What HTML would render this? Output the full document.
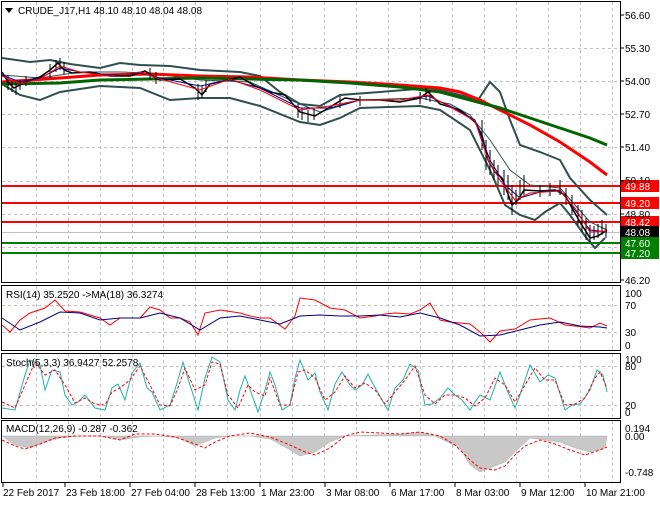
<!DOCTYPE html>
<html><head><meta charset="utf-8"><style>
body{margin:0;background:#fff;width:660px;height:500px;overflow:hidden;font-family:"Liberation Sans",sans-serif}
svg text{font-family:"Liberation Sans",sans-serif;font-size:10px;fill:#000}
</style></head><body>
<svg width="660" height="500" xmlns="http://www.w3.org/2000/svg">
<rect width="660" height="500" fill="#fff"/>
<g fill="none" stroke="#000" stroke-width="1">
<rect x="1.5" y="1.5" width="619" height="281"/>
<rect x="1.5" y="285.5" width="619" height="65"/>
<rect x="1.5" y="353.5" width="619" height="65"/>
<rect x="1.5" y="420.5" width="619" height="62"/>
</g>
<g stroke="#c0c0c0" stroke-dasharray="3,3" stroke-width="1">
<path d="M36.5 2V282M68.5 2V282M100.5 2V282M132.5 2V282M163.5 2V282M195.5 2V282M227.5 2V282M260.5 2V282M292.5 2V282M324.5 2V282M356.5 2V282M388.5 2V282M420.5 2V282M452.5 2V282M484.5 2V282M516.5 2V282M548.5 2V282M580.5 2V282M612.5 2V282"/>
<path d="M36.5 286V350M68.5 286V350M100.5 286V350M132.5 286V350M163.5 286V350M195.5 286V350M227.5 286V350M260.5 286V350M292.5 286V350M324.5 286V350M356.5 286V350M388.5 286V350M420.5 286V350M452.5 286V350M484.5 286V350M516.5 286V350M548.5 286V350M580.5 286V350M612.5 286V350"/>
<path d="M36.5 354V418M68.5 354V418M100.5 354V418M132.5 354V418M163.5 354V418M195.5 354V418M227.5 354V418M260.5 354V418M292.5 354V418M324.5 354V418M356.5 354V418M388.5 354V418M420.5 354V418M452.5 354V418M484.5 354V418M516.5 354V418M548.5 354V418M580.5 354V418M612.5 354V418"/>
<path d="M36.5 421V482M68.5 421V482M100.5 421V482M132.5 421V482M163.5 421V482M195.5 421V482M227.5 421V482M260.5 421V482M292.5 421V482M324.5 421V482M356.5 421V482M388.5 421V482M420.5 421V482M452.5 421V482M484.5 421V482M516.5 421V482M548.5 421V482M580.5 421V482M612.5 421V482"/>
<path d="M2 48.5H620M2 81.5H620M2 114.5H620M2 147.5H620M2 181.5H620M2 214.5H620M2 247.5H620"/>
<path d="M2 305.5H620M2 332.5H620M2 366.5H620M2 405.5H620"/>
</g>
<path d="M2 186H620M2 203H620M2 222H620" stroke="#f00" stroke-width="2"/>
<path d="M2 243H620M2 253H620" stroke="#008000" stroke-width="2"/>
<path d="M2 232.5H620" stroke="#c0c0c0" stroke-width="1"/>
<g fill="none" stroke="#2f4f4f" stroke-width="2">
<polyline points="2,58 30,62 50,60 70,64 100,68 120,63 140,65 170,66 200,70 240,72 260,76 280,92 300,104 320,106 340,95 380,92 430,88 460,95 478,100 490,82 500,92 510,120 520,145 540,152 560,160 570,178 590,200 607,215"/>
<polyline points="2,84 20,95 40,100 60,92 100,86 140,88 170,100 200,98 230,98 260,106 300,122 320,125 340,118 360,108 420,106 440,110 470,130 490,170 505,205 520,215 535,220 545,212 560,203 570,215 585,236 595,248 605,238"/>
<polyline points="2,75 40,78 80,72 120,72 150,73 200,80 250,82 290,100 320,112 360,100 420,98 450,104 470,115 490,140 510,170 530,185 560,188 575,205 590,222 607,230" stroke-width="1"/>
</g>
<polyline fill="none" stroke="#f00" stroke-width="3" points="2,82 60,78 100,75 150,74 200,76 250,77 300,80 350,82 400,85 440,88 460,92 480,100 500,110 530,125 560,142 590,162 607,175"/>
<polyline fill="none" stroke="#006400" stroke-width="3" points="2,84 60,83 100,80 150,79 200,78 250,79 300,80 350,83 400,87 440,92 470,100 500,108 530,118 560,128 590,138 607,145"/>
<!-- bars -->
<path stroke="#000" stroke-width="1" d="M8 76V90M12 80V92M16 82V95M20 80V90M26 76V86M50 64V78M56 60V72M60 58V70M64 62V74M150 68V80M156 72V84M198 84V100M202 86V98M206 80V92M298 104V118M302 108V120M308 110V122M314 108V120M340 96V108M360 96V106M420 92V104M426 88V100M430 90V102M482 120V150M486 140V170M490 150V175M494 160V180M498 165V185M504 170V195M508 175V200M512 185V215M516 190V205M520 180V200M524 175V195M540 185V197M550 183V196M560 180V195M566 188V205M572 195V215M578 205V225M582 210V232M586 218V240M590 225V242M594 226V240M598 224V238M602 220V235M606 224V238"/>
<polyline fill="none" stroke="#000" stroke-width="1.5" points="2,72 8,82 14,88 22,84 30,80 40,77 50,70 58,63 64,70 72,73 90,72 110,76 130,76 145,71 160,80 180,79 195,88 202,95 210,84 240,77 255,86 270,92 285,95 300,112 315,116 335,104 345,98 360,100 380,100 400,102 420,98 428,92 440,104 460,110 475,122 482,135 488,160 495,172 502,178 512,205 518,200 524,190 540,191 555,190 565,195 572,208 580,222 590,238 598,236 607,230"/>
<polyline fill="none" stroke="#00008b" stroke-width="1" points="2,75 20,82 40,78 60,68 80,72 110,75 140,73 160,78 200,86 230,80 260,88 300,108 330,108 360,100 400,100 428,96 450,106 475,120 490,160 505,185 520,198 540,192 560,190 575,210 590,230 607,232"/>
<polyline fill="none" stroke="#f00" stroke-width="1" points="2,76 20,84 40,79 60,66 80,72 110,76 140,72 160,79 200,90 230,79 260,90 300,110 330,106 360,100 400,100 428,95 450,107 475,121 488,160 500,180 515,200 530,193 560,191 575,208 590,232 607,231"/>
<polyline fill="none" stroke="#f00" stroke-width="1" points="2,325 10,332 20,320 30,313 45,308 55,300 65,311 80,312 100,318 110,325 120,318 140,318 150,307 160,310 170,318 180,318 190,322 198,335 205,313 220,310 240,313 250,316 260,318 270,318 285,329 295,316 300,298 315,300 330,308 345,310 360,318 375,316 385,314 395,313 410,314 420,310 430,303 440,320 450,322 470,324 480,332 490,342 500,331 515,329 530,320 550,318 565,325 575,326 590,328 600,323 607,326"/>
<polyline fill="none" stroke="#00008b" stroke-width="1" points="2,318 20,330 40,322 60,312 80,313 100,320 120,318 140,318 160,313 180,318 200,330 220,318 240,316 260,320 280,324 300,316 320,315 340,316 360,316 380,315 400,317 420,313 440,318 460,325 480,336 500,335 520,330 540,325 560,322 580,326 600,327 607,328"/>
<polyline fill="none" stroke="#20b2aa" stroke-width="1" points="2,408 15,410 25,375 30,360 40,365 45,390 52,370 60,372 65,395 72,405 78,402 85,395 95,408 105,410 112,388 118,384 125,400 132,373 140,363 147,388 152,392 160,410 170,405 178,380 183,362 190,385 198,410 205,378 212,357 220,362 228,400 235,410 240,390 245,376 252,395 258,412 265,390 270,372 275,385 282,410 290,405 295,378 300,360 308,380 315,373 320,392 328,410 335,384 342,372 350,385 355,390 362,385 368,374 372,382 382,400 388,410 395,388 403,380 410,364 418,370 425,405 432,404 440,398 448,388 455,395 462,400 470,410 475,402 480,395 490,400 500,372 507,390 515,408 520,395 530,365 540,382 548,375 555,378 565,410 572,405 580,404 590,390 597,370 603,375 607,392"/>
<polyline fill="none" stroke="#f00" stroke-width="1" stroke-dasharray="3,2" points="2,402 15,408 25,385 35,362 45,375 55,370 65,385 75,403 85,398 95,404 105,405 112,392 120,388 130,380 140,366 150,385 160,405 170,406 178,388 185,368 195,390 205,385 212,362 220,364 228,395 238,408 248,385 255,392 265,396 270,378 280,405 290,405 298,372 305,370 315,378 325,400 335,392 345,376 355,388 365,383 375,390 385,404 395,392 405,380 415,366 425,395 435,404 445,395 455,395 465,398 475,406 485,398 495,378 505,385 515,402 525,385 535,368 545,380 555,380 565,405 575,404 585,398 595,378 600,372 607,388"/>
<path d="M2 436 L15 445 L30 448 L45 442 L60 438 L80 436 L100 436 L120 440 L140 437 L160 436 L180 438 L195 446 L205 442 L215 438 L230 436 L250 436 L270 439 L285 447 L300 456 L315 452 L330 442 L345 436 L400 434 L420 432 L435 436 L460 448 L470 465 L480 472 L490 468 L505 462 L515 452 L530 438 L545 440 L560 442 L575 448 L590 452 L605 448 L607 436 Z" fill="#c8c8c8" stroke="#b0b0b0" stroke-width="0.5"/>
<polyline fill="none" stroke="#f00" stroke-width="1" stroke-dasharray="3,2" points="2,440 15,446 25,449 40,444 55,438 75,436 100,436 120,440 135,434 155,434 175,437 195,444 205,448 215,442 230,436 250,433 270,437 290,445 305,452 315,455 330,448 345,436 360,432 380,433 400,434 420,432 440,436 455,445 470,460 480,468 495,470 505,466 515,455 525,446 540,440 555,444 570,450 585,455 600,450 607,447"/>
<rect x="621" y="180" width="38" height="12" fill="#f00"/>
<rect x="621" y="197" width="38" height="12" fill="#f00"/>
<rect x="621" y="216" width="38" height="12" fill="#f00"/>
<rect x="621" y="226" width="38" height="12" fill="#000"/>
<rect x="621" y="237" width="38" height="12" fill="#008000"/>
<rect x="621" y="247" width="38" height="12" fill="#008000"/>
<g>
<text x="625" y="19">56.60</text><text x="625" y="52">55.30</text><text x="625" y="85">54.00</text><text x="625" y="118">52.70</text><text x="625" y="151">51.40</text><text x="625" y="184">50.10</text><text x="625" y="218">48.80</text><text x="625" y="284">46.20</text>
<text x="625" y="190" style="fill:#fff">49.88</text><text x="625" y="207" style="fill:#fff">49.20</text><text x="625" y="226" style="fill:#fff">48.42</text><text x="625" y="236" style="fill:#fff">48.08</text><text x="625" y="247" style="fill:#fff">47.60</text><text x="625" y="257" style="fill:#fff">47.20</text>
<text x="625" y="297">100</text><text x="625" y="309">70</text><text x="625" y="336">30</text><text x="625" y="349">0</text>
<text x="625" y="363">100</text><text x="625" y="370">80</text><text x="625" y="409">20</text><text x="625" y="416">0</text>
<text x="625" y="432">0.194</text><text x="625" y="440">0.00</text><text x="625" y="476">-0.748</text>
</g>
<path d="M621 15H624M621 48H624M621 81H624M621 114H624M621 147H624M621 181H624M621 214H624M621 280H624" stroke="#000"/>
<path d="M3 483V487M65 483V487M130 483V487M195 483V487M260 483V487M325 483V487M390 483V487M455 483V487M520 483V487M585 483V487" stroke="#000"/>
<path d="M5 8L13 8L9 13Z" fill="#000"/>
<text x="18" y="14">CRUDE_J17,H1  48.10 48.10 48.04 48.08</text>
<text x="6" y="298">RSI(14) 35.2520  -&gt;MA(18) 36.3274</text>
<text x="6" y="366">Stoch(5,3,3) 36.9427 52.2578</text>
<text x="6" y="432">MACD(12,26,9) -0.287 -0.362</text>
<text x="3" y="496">22 Feb 2017</text><text x="66" y="496">23 Feb 18:00</text><text x="131" y="496">27 Feb 04:00</text><text x="196" y="496">28 Feb 13:00</text><text x="261" y="496">1 Mar 23:00</text><text x="326" y="496">3 Mar 08:00</text><text x="391" y="496">6 Mar 17:00</text><text x="456" y="496">8 Mar 03:00</text><text x="521" y="496">9 Mar 12:00</text><text x="586" y="496">10 Mar 21:00</text>
</svg>
</body></html>
